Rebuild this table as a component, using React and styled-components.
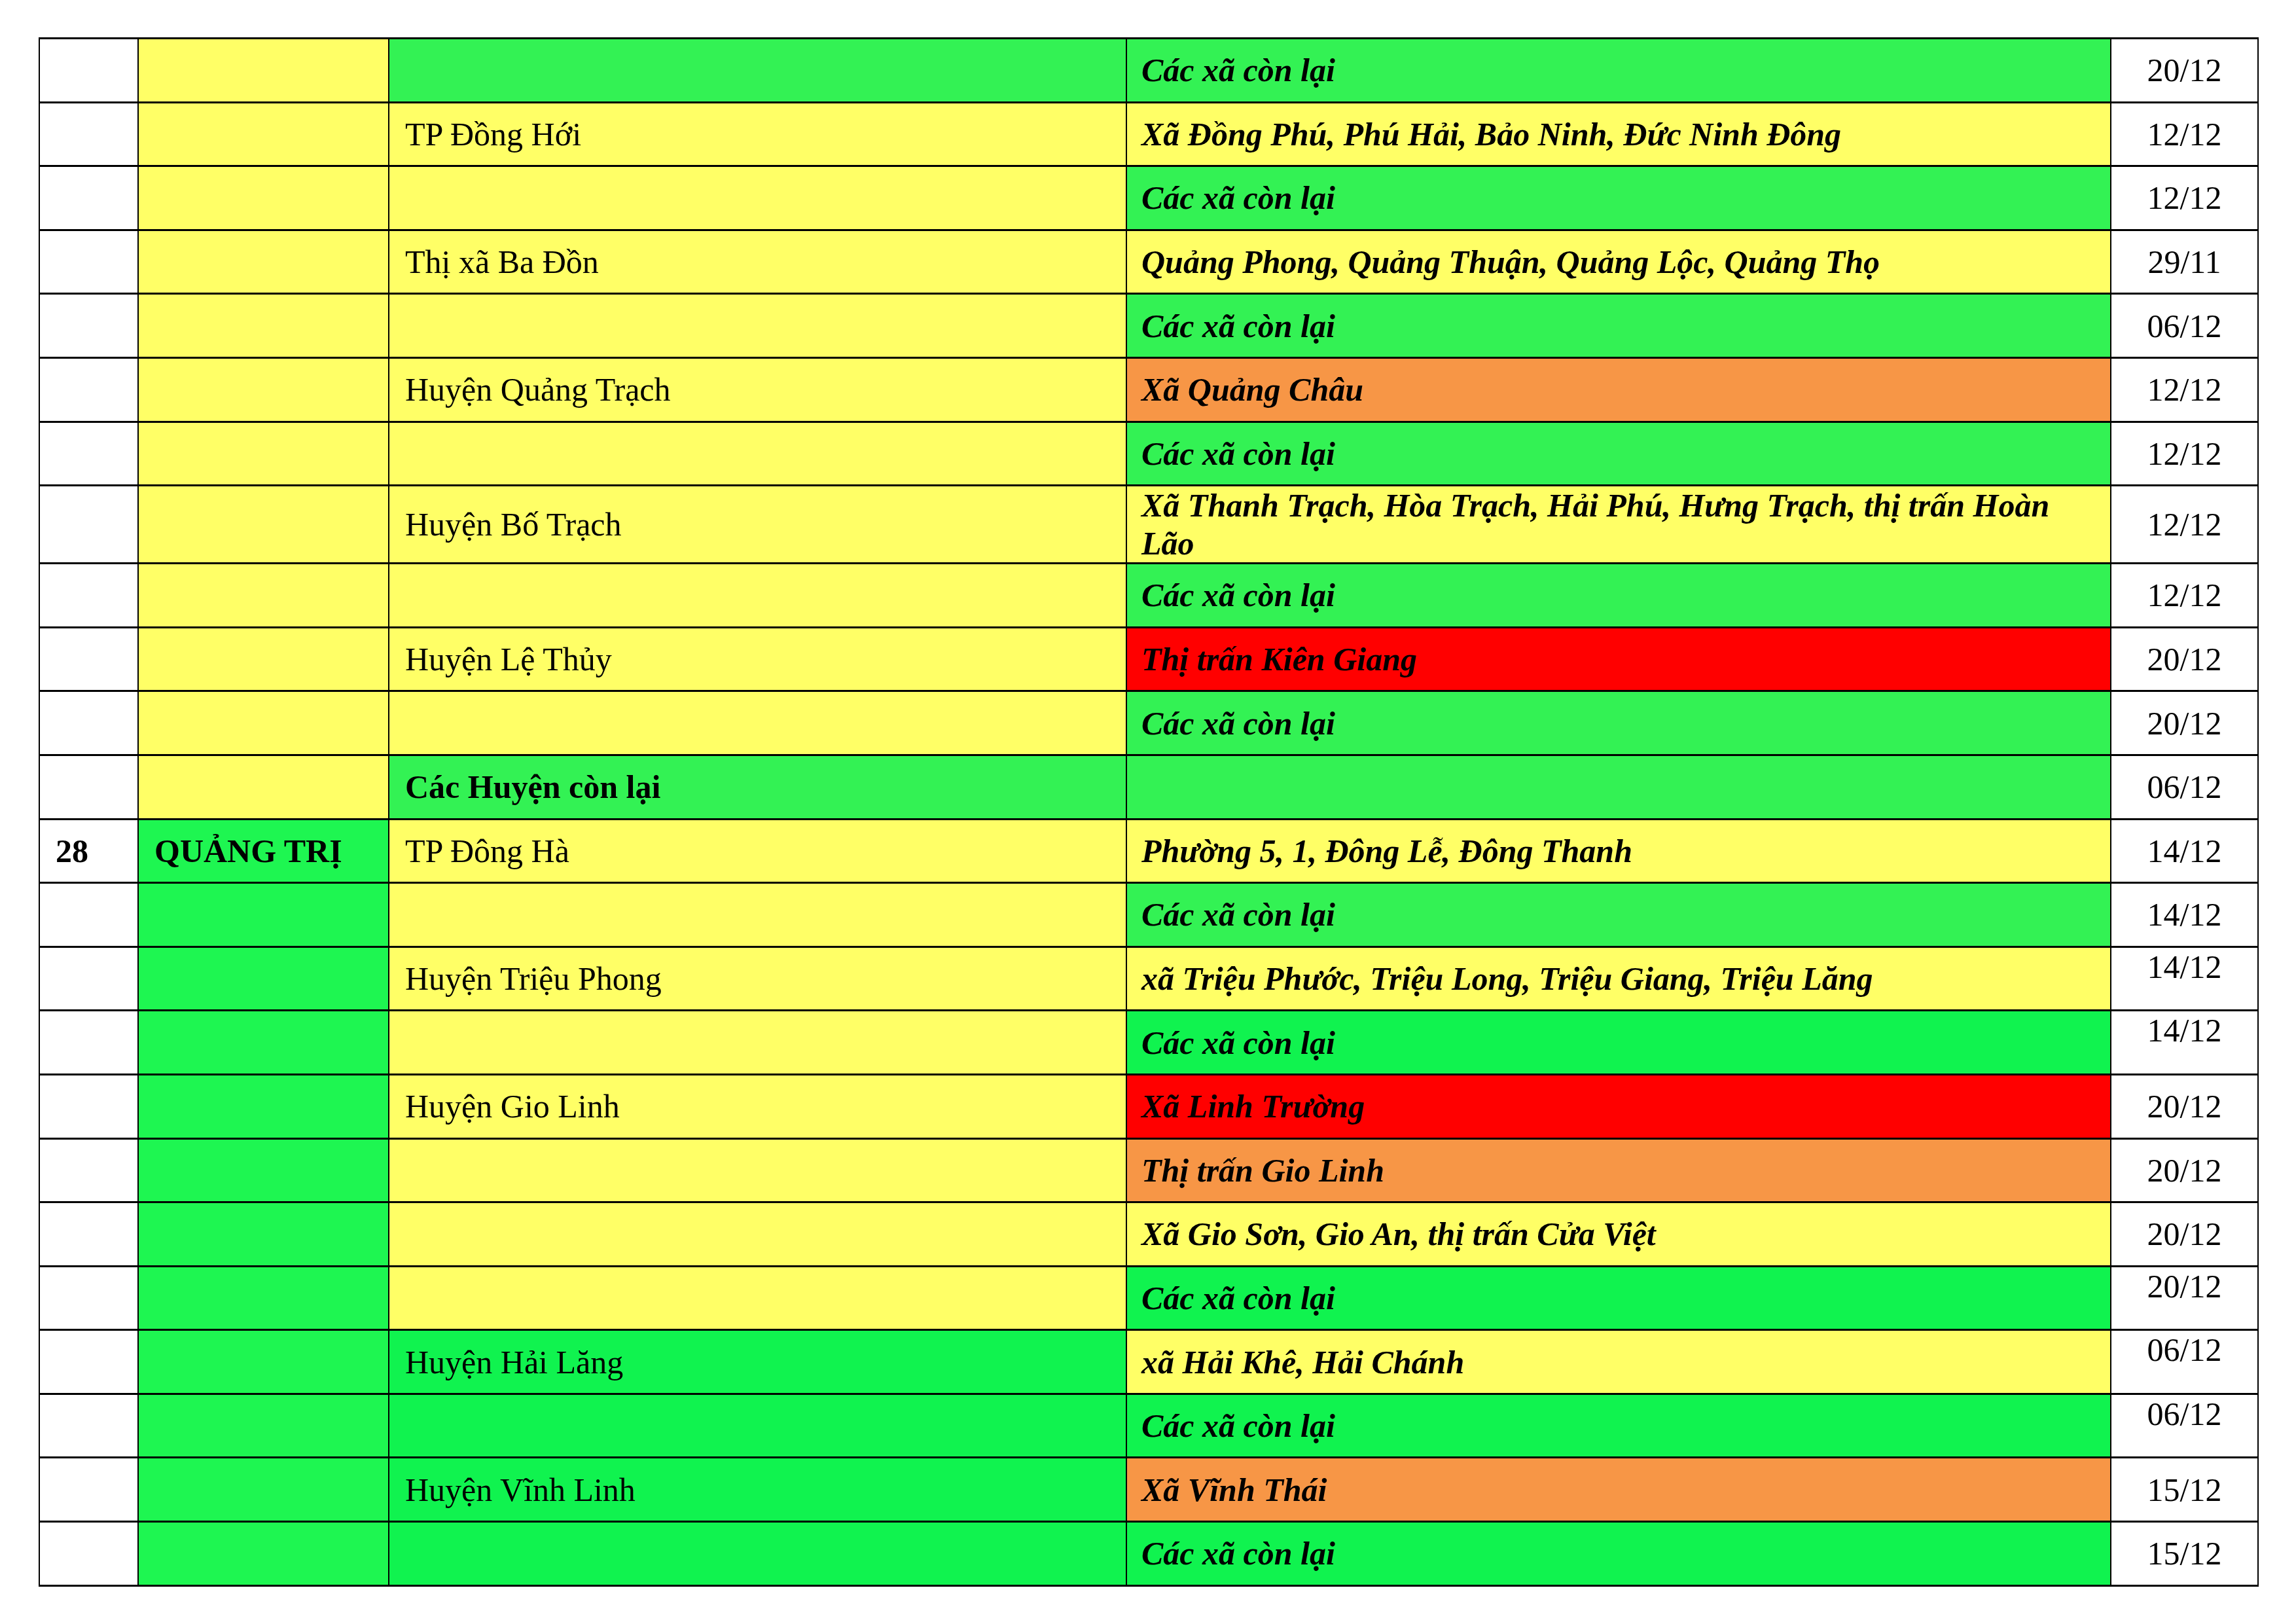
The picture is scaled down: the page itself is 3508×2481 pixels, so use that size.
import React from "react";
import styled, { createGlobalStyle } from "styled-components";

const Global = createGlobalStyle`
  html, body { margin: 0; padding: 0; background: #ffffff; }
  body { font-family: "Liberation Serif", "Times New Roman", serif; color: #000; }
`;

const COLORS = {
  w: "#ffffff",
  y: "#ffff66",
  g: "#33f254",
  q: "#1ef651",
  h: "#10f34f",
  o: "#f79646",
  r: "#ff0000",
};

const Page = styled.div`
  padding: 57px 0 0 59px;
`;

const Table = styled.table`
  border-collapse: collapse;
  table-layout: fixed;
  width: 3390px;
  font-size: 50px;
  line-height: normal;
`;

const Col = styled.col`
  width: ${(p) => p.$w}px;
`;

const Row = styled.tr`
  height: ${(p) => (p.$tall ? 118 : 97.6)}px;
`;

const Cell = styled.td`
  background: ${(p) => COLORS[p.$bg] || COLORS.w};
  border-top: 3px solid #000;
  border-bottom: 3px solid #000;
  border-left: 2px solid #000;
  border-right: 2px solid #000;
  padding: 0 20px 0 24px;
  vertical-align: middle;
  white-space: normal;
`;

const Plain = styled(Cell)`
  font-weight: ${(p) => (p.$bold ? 700 : 400)};
`;

const Commune = styled(Cell)`
  font-weight: 700;
  font-style: italic;
  padding-left: 22px;
`;

const DateCell = styled(Cell)`
  text-align: center;
  padding: 0;
  vertical-align: ${(p) => (p.$top ? "top" : "middle")};
`;

const columns = [151, 383, 1127, 1504, 225];

// [no, province, provBg, district, distBg, distBold, commune, comBg, date, topDate, tall]
const rows = [
  ["", "", "y", "", "g", false, "Các xã còn lại", "g", "20/12"],
  ["", "", "y", "TP Đồng Hới", "y", false, "Xã Đồng Phú, Phú Hải, Bảo Ninh, Đức Ninh Đông", "y", "12/12"],
  ["", "", "y", "", "y", false, "Các xã còn lại", "g", "12/12"],
  ["", "", "y", "Thị xã Ba Đồn", "y", false, "Quảng Phong, Quảng Thuận, Quảng Lộc, Quảng Thọ", "y", "29/11"],
  ["", "", "y", "", "y", false, "Các xã còn lại", "g", "06/12"],
  ["", "", "y", "Huyện Quảng Trạch", "y", false, "Xã Quảng Châu", "o", "12/12"],
  ["", "", "y", "", "y", false, "Các xã còn lại", "g", "12/12"],
  ["", "", "y", "Huyện Bố Trạch", "y", false, "Xã Thanh Trạch, Hòa Trạch, Hải Phú, Hưng Trạch, thị trấn Hoàn Lão", "y", "12/12", false, true],
  ["", "", "y", "", "y", false, "Các xã còn lại", "g", "12/12"],
  ["", "", "y", "Huyện Lệ Thủy", "y", false, "Thị trấn Kiên Giang", "r", "20/12"],
  ["", "", "y", "", "y", false, "Các xã còn lại", "g", "20/12"],
  ["", "", "y", "Các Huyện còn lại", "g", true, "", "g", "06/12"],
  ["28", "QUẢNG TRỊ", "q", "TP Đông Hà", "y", false, "Phường 5, 1, Đông Lễ, Đông Thanh", "y", "14/12"],
  ["", "", "q", "", "y", false, "Các xã còn lại", "g", "14/12"],
  ["", "", "q", "Huyện Triệu Phong", "y", false, "xã Triệu Phước, Triệu Long, Triệu Giang, Triệu Lăng", "y", "14/12", true],
  ["", "", "q", "", "y", false, "Các xã còn lại", "h", "14/12", true],
  ["", "", "q", "Huyện Gio Linh", "y", false, "Xã Linh Trường", "r", "20/12"],
  ["", "", "q", "", "y", false, "Thị trấn Gio Linh", "o", "20/12"],
  ["", "", "q", "", "y", false, "Xã Gio Sơn, Gio An, thị trấn Cửa Việt", "y", "20/12"],
  ["", "", "q", "", "y", false, "Các xã còn lại", "h", "20/12", true],
  ["", "", "q", "Huyện Hải Lăng", "h", false, "xã Hải Khê, Hải Chánh", "y", "06/12", true],
  ["", "", "q", "", "h", false, "Các xã còn lại", "h", "06/12", true],
  ["", "", "q", "Huyện Vĩnh Linh", "h", false, "Xã Vĩnh Thái", "o", "15/12"],
  ["", "", "q", "", "h", false, "Các xã còn lại", "h", "15/12"],
];

export default function App() {
  return (
    <Page>
      <Global />
      <Table>
        <colgroup>
          {columns.map((w, i) => (
            <Col key={i} $w={w} />
          ))}
        </colgroup>
        <tbody>
          {rows.map((r, i) => (
            <Row key={i} $tall={r[10]}>
              <Plain $bg="w" $bold>{r[0]}</Plain>
              <Plain $bg={r[2]} $bold>{r[1]}</Plain>
              <Plain $bg={r[4]} $bold={r[5]}>{r[3]}</Plain>
              <Commune $bg={r[7]}>{r[6]}</Commune>
              <DateCell $bg="w" $top={r[9]}>{r[8]}</DateCell>
            </Row>
          ))}
        </tbody>
      </Table>
    </Page>
  );
}
